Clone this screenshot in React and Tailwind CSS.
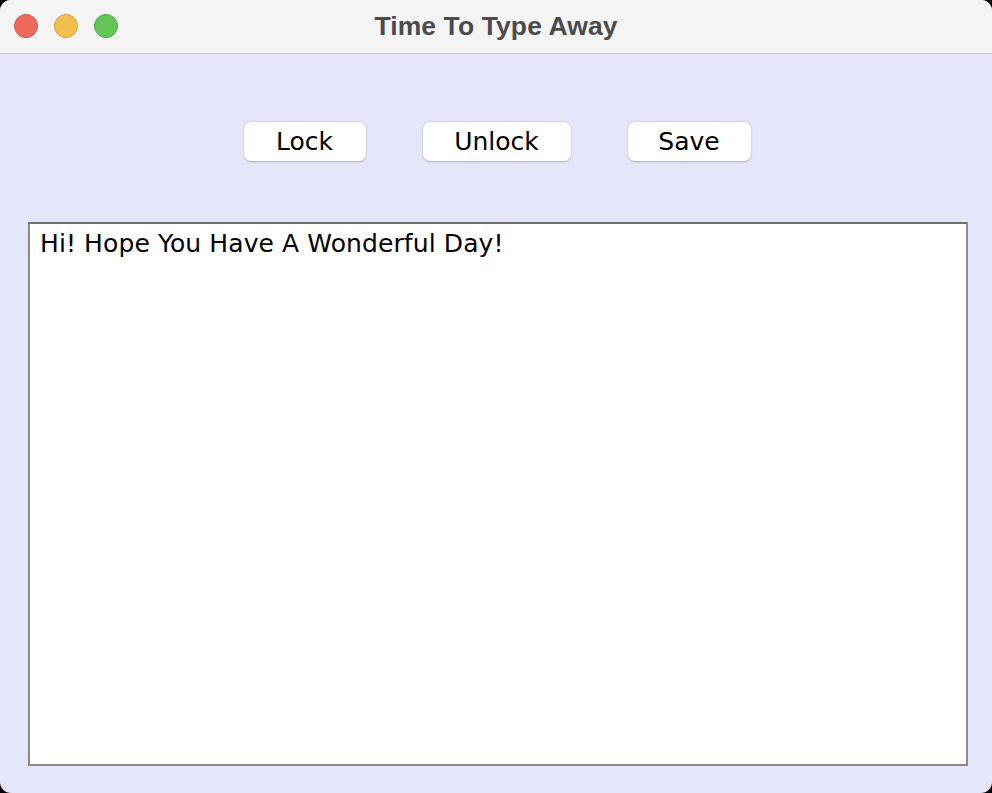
import React from "react";

const App = () => {
  return (
    <div className="w-[992px] h-[793px] bg-black">
      <div className="w-full h-full rounded-[11px] overflow-hidden flex flex-col bg-[#e6e6fa]">
        {/* Title bar */}
        <div className="relative h-[54px] bg-[#f5f5f5] border-b border-[#c9c9d4] flex items-center justify-center shrink-0">
          <div className="absolute left-[14px] top-[14px] flex gap-[16px]">
            <span className="w-[24px] h-[24px] rounded-full bg-[#ee6a5f] border border-[#d6554b]" />
            <span className="w-[24px] h-[24px] rounded-full bg-[#f5bf4f] border border-[#d9a23c]" />
            <span className="w-[24px] h-[24px] rounded-full bg-[#62c554] border border-[#4fac42]" />
          </div>
          <h1 className="text-[26.5px] font-bold text-[#4b4b4b] font-['Liberation_Sans',sans-serif] leading-none -mt-[1px] tracking-[0.1px]">
            Time To Type Away
          </h1>
        </div>

        {/* Buttons */}
        <div className="flex justify-center gap-[57px] mt-[68px] pl-[2px]">
          {[
            ["Lock", "w-[122px]"],
            ["Unlock", "w-[148px]"],
            ["Save", "w-[123px]"],
          ].map(([label, w]) => (
            <button
              key={label}
              className={`${w} h-[39px] bg-white rounded-[7px] shadow-[0_0.5px_2px_rgba(0,0,0,0.25)] text-black text-[25px] font-['DejaVu_Sans',sans-serif] leading-none`}
            >
              {label}
            </button>
          ))}
        </div>

        {/* Text area */}
        <div className="ml-[28px] mr-[24px] mt-[61px] h-[544px] border-2 border-[#8a8a8a] border-t-[#6f6f6f] bg-white px-[10px] pt-[5px]">
          <p className="text-[25px] text-black font-['DejaVu_Sans',sans-serif] leading-[30px] tracking-[0.1px]">
            Hi! Hope You Have A Wonderful Day!
          </p>
        </div>
      </div>
    </div>
  );
};

export default App;
